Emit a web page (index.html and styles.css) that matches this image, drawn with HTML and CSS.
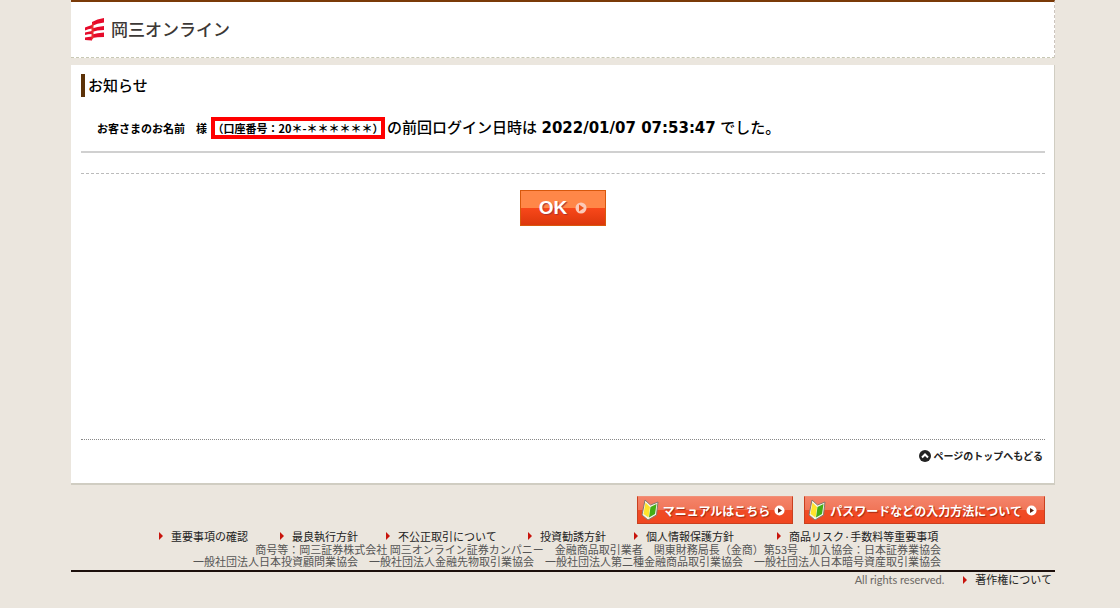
FILE: index.html
```html
<!DOCTYPE html>
<html lang="ja">
<head>
    <meta charset="UTF-8">
    <meta name="viewport" content="width=device-width, initial-scale=1.0">
    <title>お知らせ | 岡三オンライン</title>
    <link rel="stylesheet" href="styles.css">
</head>
<body id="top">
    <header class="header">
        <a class="logo" href="#">
            <svg width="21" height="24" viewBox="0 0 21 24" aria-hidden="true">
                <g fill="#e60a2a">
                    <path d="M8 5 Q13 2 20 1 V5.5 Q13 6 8 9Z"/>
                    <path d="M8 11.5 Q13 9.5 20 9 V13 Q13 13 8 15Z"/>
                    <path d="M8 17.5 Q13 16 20 15.5 V20 Q13 20 8 21Z"/>
                    <path d="M1 10.5 Q4 9 8 8 V11.5 Q4 12 1 13.5Z"/>
                    <path d="M1 15.5 Q4 14.5 8 14 V17 Q4 17 1 18Z"/>
                    <path d="M1 20.5 Q4 20 8 19.5 V23.5 Q4 23 1 23Z"/>
                </g>
                <path d="M7.5 8 L9.5 5 V21 L7.5 23.5Z" fill="#ea3030"/>
            </svg>
            <span>岡三オンライン</span>
        </a>
    </header>

    <main class="main">
        <h1>お知らせ</h1>
        <p class="message">
            <span class="customer">お客さまのお名前　様</span>
            <span class="account"><span class="paren">（</span>口座番号：20＊-＊＊＊＊＊＊<span class="paren">）</span></span>
            <span class="login">の前回ログイン日時は <time datetime="2022-01-07T07:53:47">2022/01/07 07:53:47</time> でした。</span>
        </p>
        <div class="action">
            <button class="ok-btn" type="button">
                OK
                <svg width="12" height="12" viewBox="0 0 12 12" aria-hidden="true">
                    <circle cx="6" cy="6" r="5.5" fill="#fbc9b8"/>
                    <path d="M4 2.5 L9 6 L4 9.5Z" fill="#f0561c"/>
                </svg>
            </button>
        </div>
        <div class="page-top">
            <a href="#top">
                <svg width="12" height="12" viewBox="0 0 12 12" aria-hidden="true">
                    <circle cx="6" cy="6" r="6" fill="#222"/>
                    <path d="M3 7.5 L6 4.5 L9 7.5" fill="none" stroke="#fff" stroke-width="2"/>
                </svg>
                <span>ページのトップへもどる</span>
            </a>
        </div>
    </main>

    <footer class="footer">
        <div class="guides">
            <a class="guide" href="#">
                <svg width="18" height="22" viewBox="0 0 18 22" aria-hidden="true">
                    <path d="M4 1 L9.5 6 L17 3 L15.5 16 L7 21 L1 16Z" fill="#f4f4ea" stroke="#85786c"/>
                    <path d="M4.5 3.5 L9 8 L7.5 18.5 L2.5 15Z" fill="#ffe32b"/>
                    <path d="M9.5 8 L15.5 5 L14 15 L8 18.5Z" fill="#43ad14"/>
                </svg>
                <span>マニュアルはこちら</span>
                <svg width="11" height="11" viewBox="0 0 11 11" aria-hidden="true">
                    <circle cx="5.5" cy="5.5" r="5" fill="#fff"/>
                    <path d="M4 3 L8 5.5 L4 8Z" fill="#5a2010"/>
                </svg>
            </a>
            <a class="guide" href="#">
                <svg width="18" height="22" viewBox="0 0 18 22" aria-hidden="true">
                    <path d="M4 1 L9.5 6 L17 3 L15.5 16 L7 21 L1 16Z" fill="#f4f4ea" stroke="#85786c"/>
                    <path d="M4.5 3.5 L9 8 L7.5 18.5 L2.5 15Z" fill="#ffe32b"/>
                    <path d="M9.5 8 L15.5 5 L14 15 L8 18.5Z" fill="#43ad14"/>
                </svg>
                <span>パスワードなどの入力方法について</span>
                <svg width="11" height="11" viewBox="0 0 11 11" aria-hidden="true">
                    <circle cx="5.5" cy="5.5" r="5" fill="#fff"/>
                    <path d="M4 3 L8 5.5 L4 8Z" fill="#5a2010"/>
                </svg>
            </a>
        </div>
        <div class="info">
            <nav class="links">
                <a class="arrow" href="#">重要事項の確認</a>
                <a class="arrow" href="#">最良執行方針</a>
                <a class="arrow" href="#">不公正取引について</a>
                <a class="arrow" href="#">投資勧誘方針</a>
                <a class="arrow" href="#">個人情報保護方針</a>
                <a class="arrow" href="#">商品リスク·手数料等重要事項</a>
            </nav>
            <p class="company">
                商号等：岡三証券株式会社 岡三オンライン証券カンパニー　金融商品取引業者　関東財務局長（金商）第53号　加入協会：日本証券業協会<br>
                一般社団法人日本投資顧問業協会　一般社団法人金融先物取引業協会　一般社団法人第二種金融商品取引業協会　一般社団法人日本暗号資産取引業協会
            </p>
        </div>
        <div class="copyright">
            <small>All rights reserved.</small>
            <a class="arrow" href="#">著作権について</a>
        </div>
    </footer>
</body>
</html>
```

FILE: styles.css
```css
* {
    box-sizing: border-box;
}
body {
    margin: 0;
    padding: 0 65px 0 71px;
    background-color: #ebe6de;
    color: #000;
    font-family: "Noto Sans CJK JP", sans-serif;
    font-size: 11px;
}
a {
    color: inherit;
    text-decoration: none;
}
.header {
    display: flex;
    align-items: center;
    height: 58px;
    padding: 0 0 2px 13px;
    background-color: #fff;
    border-top: 2px solid #7a3a08;
    border-right: 1px dashed #ccc5be;
    border-bottom: 1px dashed #c8c8b4;
}
.logo {
    display: flex;
    align-items: center;
    gap: 6px;
    color: #3c3836;
    font-size: 17px;
    font-weight: 500;
    line-height: 24px;
}
.main {
    margin-top: 7px;
    padding: 9px 9px 0 10px;
    background-color: #fff;
    border-right: 1px solid #d0cdc2;
    border-bottom: 2px solid #d0cdc2;
}
h1 {
    margin: 0;
    padding: 0 0 2px 3px;
    border-left: 4px solid #5c3208;
    font-size: 15px;
    font-weight: 500;
    line-height: 21px;
}
.message {
    display: flex;
    align-items: center;
    margin: 0;
    padding: 19px 0 12px 16px;
    border-bottom: 2px solid #d0d0d0;
}
.customer,
.account {
    font-weight: 700;
    line-height: 14px;
}
.account {
    margin: 0 2px 0 4px;
    padding: 0 3px;
    border: 4px solid #f00;
}
.paren {
    font-feature-settings: "halt";
}
.login {
    font-size: 15px;
    font-weight: 500;
    line-height: 22px;
}
time {
    margin: 0 1px;
    font-family: "DejaVu Sans", sans-serif;
    font-weight: 700;
}
.action {
    margin-top: 20px;
    padding: 16px 0 213px;
    border-top: 1px dashed #bbb;
    text-align: center;
}
.ok-btn {
    display: inline-flex;
    align-items: center;
    justify-content: center;
    gap: 8px;
    width: 86px;
    height: 36px;
    padding: 0;
    border: 1px solid #d8580c;
    background: linear-gradient(#ff8748 50%, #f8481a 50%, #dc370c);
    color: #fff;
    font-family: "Liberation Sans", sans-serif;
    font-size: 19px;
    font-weight: 700;
    text-shadow: 1px 1px 1px #a33;
    vertical-align: top;
}
.page-top {
    display: flex;
    justify-content: flex-end;
    padding: 8px 2px 19px 0;
    border-top: 1px dotted #888;
}
.page-top a {
    display: flex;
    align-items: center;
    gap: 2px;
    color: #222;
    font-size: 10px;
    font-weight: 700;
    line-height: 16px;
}
.guides {
    display: flex;
    justify-content: flex-end;
    gap: 11px;
    padding: 11px 10px 0 0;
}
.guide {
    display: flex;
    align-items: center;
    gap: 4px;
    height: 28px;
    padding: 0 7px 0 3px;
    border: 1px solid #c9401f;
    border-top-color: #f19078;
    background: linear-gradient(#f4846a, #f07558 50%, #f04c26 50%, #f04620);
    color: #fff;
    font-size: 12px;
    font-weight: 700;
    text-shadow: 1px 1px 1px #a32a10;
}
.info {
    padding: 5px 114px 0 88px;
    color: #222;
}
.links {
    display: grid;
    grid-template-columns: 121fr 106fr 142fr 106fr 143fr 164fr;
    line-height: 14px;
    white-space: nowrap;
}
.arrow {
    display: flex;
    align-items: center;
    gap: 8px;
}
.arrow::before {
    content: "";
    border: 4px solid transparent;
    border-right: 0;
    border-left-color: #c8140c;
}
.company {
    margin: 0 0 0 -50px;
    color: #555;
    line-height: 12px;
    text-align: right;
    white-space: nowrap;
}
.copyright {
    display: flex;
    justify-content: flex-end;
    align-items: center;
    gap: 19px;
    margin-top: 3px;
    padding-right: 3px;
    border-top: 2px solid #1c100c;
    color: #222;
    line-height: 15px;
}
.copyright small {
    color: #6c6864;
    font-family: Lato, sans-serif;
    font-size: 11px;
}
```
